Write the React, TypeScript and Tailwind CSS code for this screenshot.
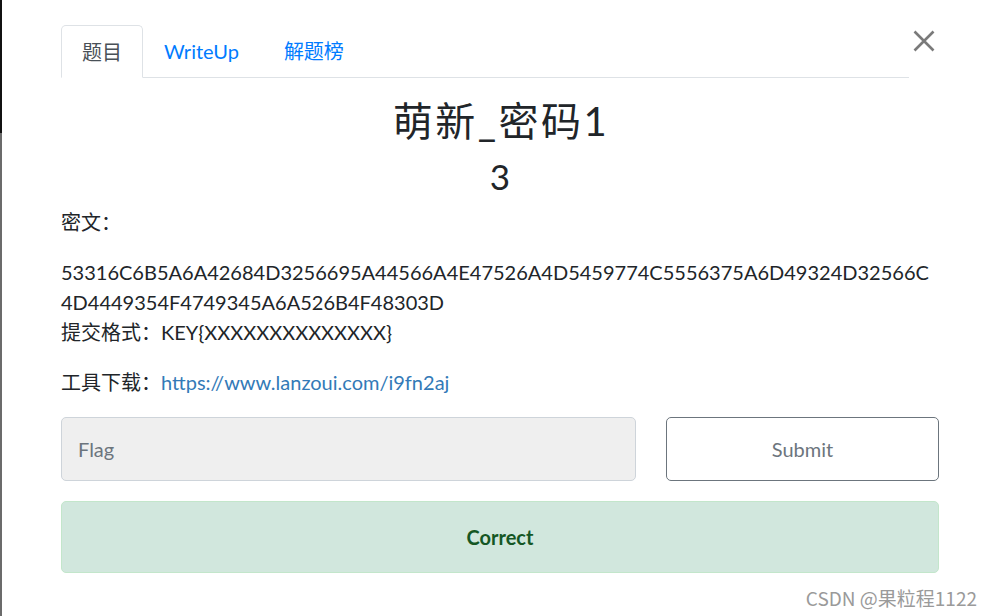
import React from "react";

export default function App() {
  const font = "font-['Lato','Noto_Sans_CJK_SC',sans-serif]";
  return (
    <div className={`relative flex h-[616px] w-full overflow-hidden bg-white text-[20px] leading-[30px] text-[#212529] ${font}`}>
      <div className="flex w-[2px] flex-col">
        <div className="h-[133px] bg-[#111]" />
        <div className="flex-1 bg-[#6b6b6b]" />
      </div>
      <div className="flex flex-1 flex-col pl-[59px] pr-[53px] pt-[25px]">
        <div className="flex">
          <div className="flex flex-1 border-b border-[#dee2e6]">
            <div className="-mb-px rounded-t-[5px] border border-[#dee2e6] border-b-white bg-white px-[20px] pb-[10px] pt-[11px] text-[#495057]">
              题目
            </div>
            <div className="pb-[10px] pl-[21px] pr-[23px] pt-[11px] text-[#007bff]">WriteUp</div>
            <div className="pb-[10px] pl-[22px] pr-[20px] pt-[11px] text-[#007bff]">解题榜</div>
          </div>
          <div className="relative w-[30px]">
            <svg className="absolute left-[4px] top-[5px]" width="22" height="22" viewBox="0 0 22 22">
              <path d="M1.5 1.5 L20.5 20.5 M20.5 1.5 L1.5 20.5" stroke="#7a7a7a" strokeWidth="2.6" fill="none" />
            </svg>
          </div>
        </div>
        <h2 className="mb-[10px] pl-[2px] pt-[19px] text-center text-[40px] leading-[48px] font-normal tracking-[2.5px]">萌新_密码1</h2>
        <h3 className="mb-[10px] text-center text-[35px] leading-[42px] font-normal">3</h3>
        <p className="mb-[20px]">密文：</p>
        <p className="mb-[20px]">
          <span className="whitespace-nowrap">53316C6B5A6A42684D3256695A44566A4E47526A4D5459774C5556375A6D49324D32566C</span>
          <br />
          <span className="whitespace-nowrap">4D4449354F4749345A6A526B4F48303D</span>
          <br />
          提交格式：KEY{"{XXXXXXXXXXXXXX}"}
        </p>
        <p className="mb-[20px]">
          工具下载：<span className="text-[#337ab7]">https://www.lanzoui.com/i9fn2aj</span>
        </p>
        <div className="flex gap-[30px]">
          <div className="flex h-[64px] w-[575px] items-center rounded-[5px] border border-[#ced4da] bg-[#efefef] pl-[16px] text-[#6c757d]">
            Flag
          </div>
          <div className="flex h-[64px] flex-1 items-center justify-center rounded-[5px] border border-[#6c757d] text-[#6c757d]">
            Submit
          </div>
        </div>
        <div className="mt-[20px] flex h-[72px] items-center justify-center rounded-[5px] border border-[#c3e6cb] bg-[#d1e7dd] font-bold text-[#155724]">
          Correct
        </div>
      </div>
      <div className="absolute bottom-[5px] right-[15px] font-['Noto_Sans_CJK_SC',sans-serif] text-[19px] leading-[26px] text-[#9a9a9a]">
        CSDN @果粒程1122
      </div>
    </div>
  );
}
